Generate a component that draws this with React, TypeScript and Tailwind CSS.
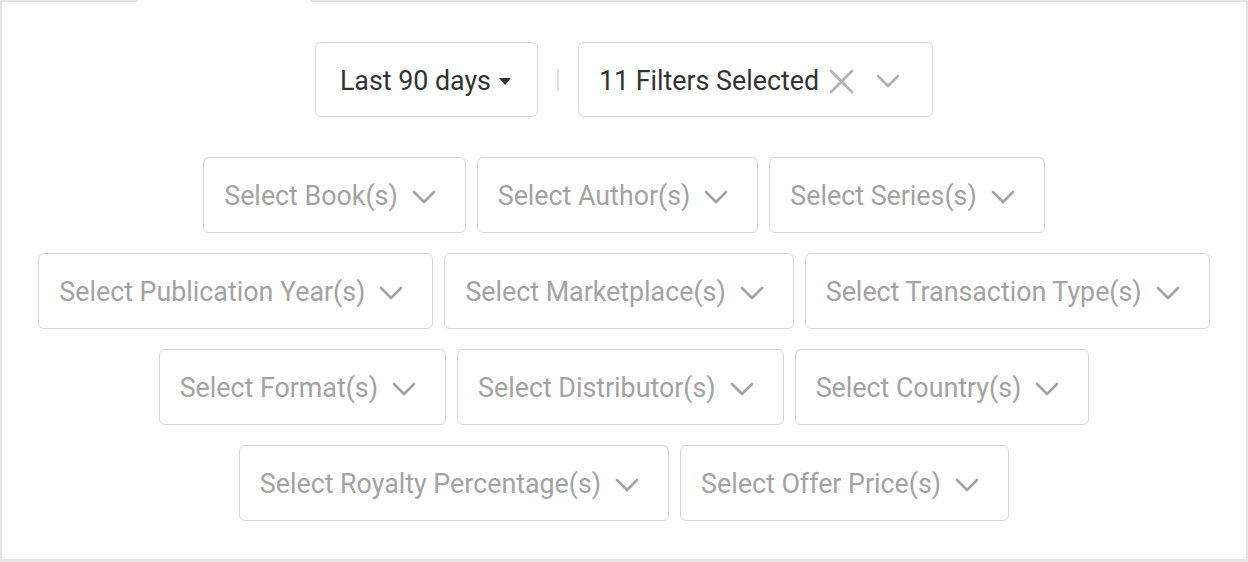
import React from "react";

const Chevron = ({ color = "#9e9e9e" }: { color?: string }) => (
  <svg width="24" height="14" viewBox="0 0 24 14" fill="none">
    <path d="M2 2 L12 12 L22 2" stroke={color} strokeWidth="2.7" strokeLinecap="round" strokeLinejoin="round" />
  </svg>
);

const XIcon = () => (
  <svg width="27" height="27" viewBox="0 0 27 27" fill="none">
    <path d="M3 3 L24 24 M24 3 L3 24" stroke="#b3b3b3" strokeWidth="2.8" strokeLinecap="round" />
  </svg>
);

const Caret = () => (
  <svg width="12" height="7" viewBox="0 0 12 7">
    <path d="M0 0 L12 0 L6 7 Z" fill="#333333" />
  </svg>
);

const SelectBtn = ({ label }: { label: string }) => (
  <div className="flex h-[76px] items-center gap-[14px] rounded-[6px] border-[1.5px] border-[#d6d6d6] bg-white pl-5 pr-[29px] pt-[3px] text-[26.8px] text-[#a3a3a3]">
    <span className="whitespace-nowrap">{label}</span>
    <Chevron color="#a3a3a3" />
  </div>
);

const rows: string[][] = [
  ["Select Book(s)", "Select Author(s)", "Select Series(s)"],
  ["Select Publication Year(s)", "Select Marketplace(s)", "Select Transaction Type(s)"],
  ["Select Format(s)", "Select Distributor(s)", "Select Country(s)"],
  ["Select Royalty Percentage(s)", "Select Offer Price(s)"],
];

export default function App() {
  return (
    <div
      className="flex h-[562px] w-[1248px] flex-col bg-white"
      style={{ fontFamily: "Roboto, 'Noto Sans', sans-serif" }}
    >
      <div className="flex h-[2px] w-full">
        <div className="w-[138px] bg-[#e4e4e4]" />
        <div className="w-[173px] bg-white" />
        <div className="flex-1 bg-[#e4e4e4]" />
      </div>
      <div className="flex flex-1 flex-col items-center border-x-2 border-b-[3px] border-[#e4e4e4] pt-10">
        <div className="flex items-center">
          <div className="flex h-[75px] items-center gap-2 rounded-[6px] border-[1.5px] border-[#d6d6d6] pl-[24px] pr-[26px] pt-[3px] text-[26.8px] text-[#333333]">
            <span className="whitespace-nowrap">Last 90 days</span>
            <Caret />
          </div>
          <div className="mx-[19px] h-[22px] w-[2px] bg-[#dedede]" />
          <div className="flex h-[75px] items-center rounded-[6px] border-[1.5px] border-[#d6d6d6] pl-5 pr-[32px] pt-[3px] text-[26.8px] text-[#333333]">
            <span className="whitespace-nowrap">11 Filters Selected</span>
            <span className="ml-[9px]"><XIcon /></span>
            <span className="ml-[21px]"><Chevron color="#b3b3b3" /></span>
          </div>
        </div>
        <div className="mt-[40px] flex flex-col items-center gap-5">
          {rows.map((r, i) => (
            <div key={i} className="flex gap-[11px]">
              {r.map((l) => (
                <SelectBtn key={l} label={l} />
              ))}
            </div>
          ))}
        </div>
      </div>
    </div>
  );
}
